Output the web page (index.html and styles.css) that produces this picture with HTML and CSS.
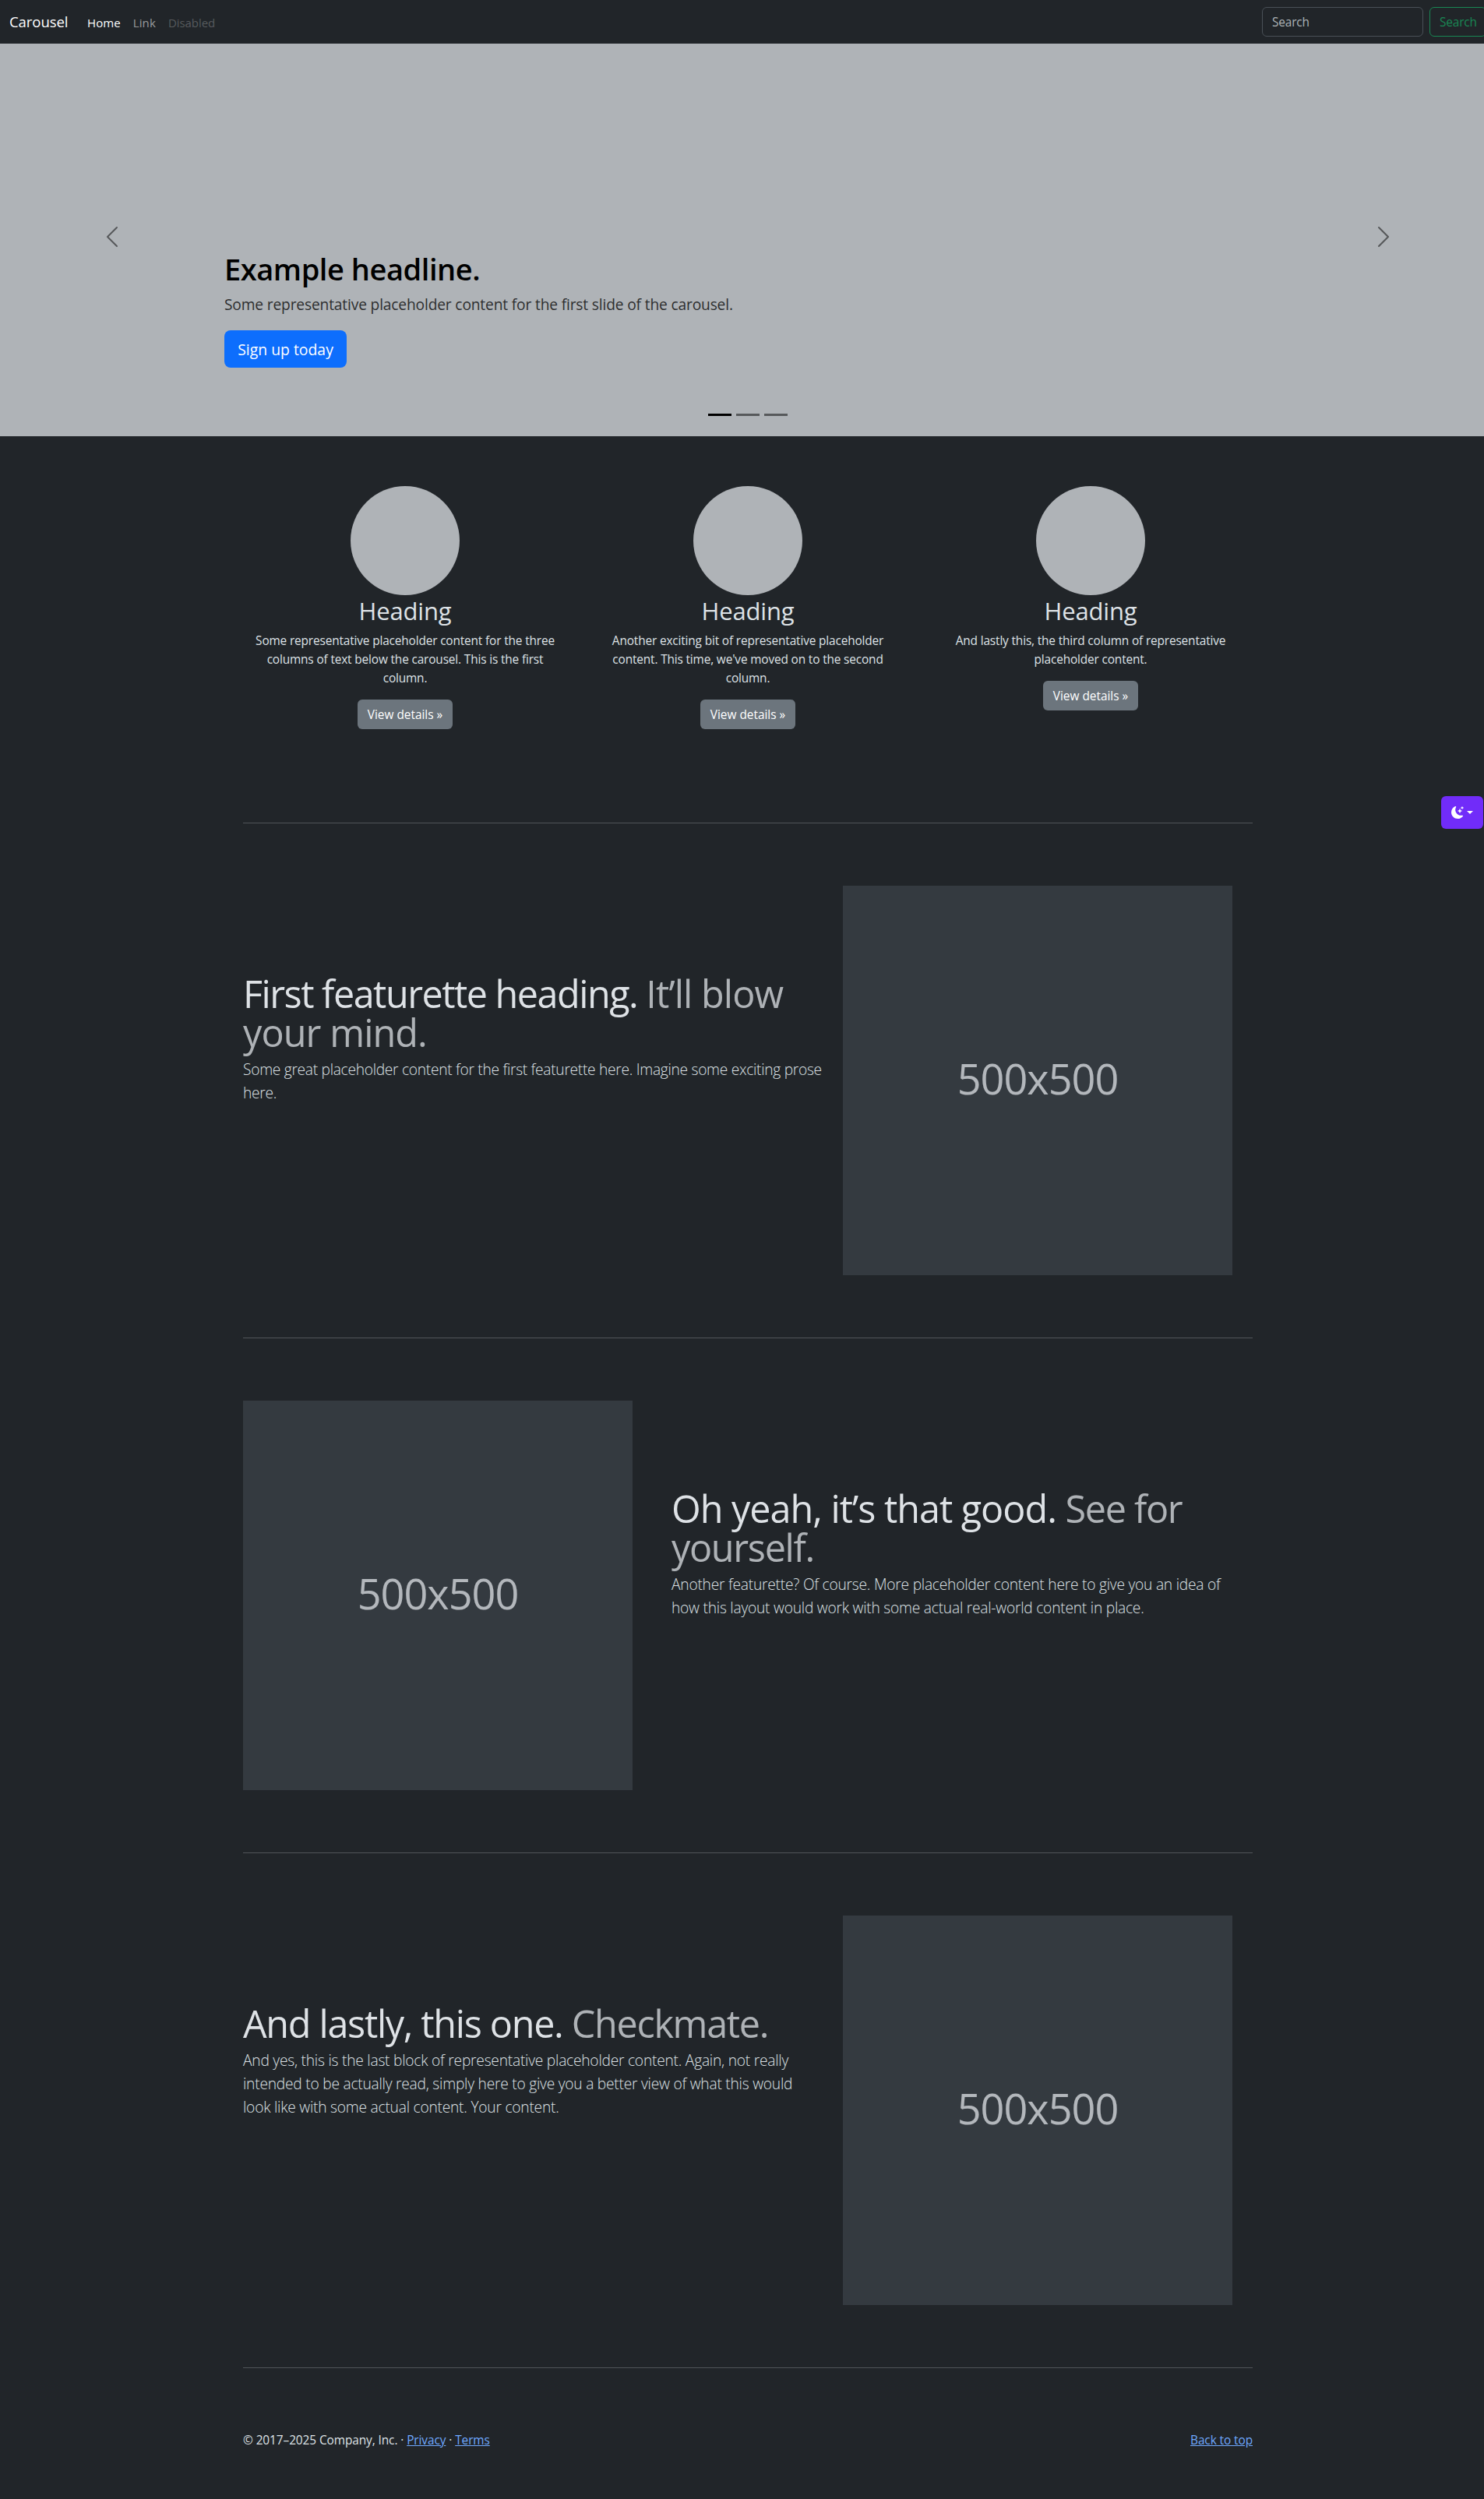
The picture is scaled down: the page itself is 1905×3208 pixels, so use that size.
FILE: index.html
```html
<!DOCTYPE html>
<html lang="en">
<head>
<meta charset="utf-8">
<title>Carousel</title>
<link rel="stylesheet" href="styles.css">
</head>
<body>
<nav class="navbar">
  <a class="brand">Carousel</a>
  <div class="nav-links">
    <a class="nav-link active">Home</a>
    <a class="nav-link">Link</a>
    <a class="nav-link disabled">Disabled</a>
  </div>
  <form class="search">
    <input class="search-input" type="search" placeholder="Search">
    <button class="search-btn" type="button">Search</button>
  </form>
</nav>

<main>
  <section class="carousel">
    <div class="arrow">
      <svg width="32" height="32" viewBox="0 0 16 16"><path fill-rule="evenodd" d="M11.354 1.646a.5.5 0 0 1 0 .708L5.707 8l5.647 5.646a.5.5 0 0 1-.708.708l-6-6a.5.5 0 0 1 0-.708l6-6a.5.5 0 0 1 .708 0z"/></svg>
    </div>
    <div class="slide">
      <h1 class="caption-title">Example headline.</h1>
      <p class="caption-text">Some representative placeholder content for the first slide of the carousel.</p>
      <a class="btn btn-primary">Sign up today</a>
    </div>
    <div class="arrow">
      <svg width="32" height="32" viewBox="0 0 16 16"><path fill-rule="evenodd" d="M4.646 1.646a.5.5 0 0 1 .708 0l6 6a.5.5 0 0 1 0 .708l-6 6a.5.5 0 0 1-.708-.708L10.293 8 4.646 2.354a.5.5 0 0 1 0-.708z"/></svg>
    </div>
    <div class="indicators"><span class="dot current"></span><span class="dot"></span><span class="dot"></span></div>
  </section>

  <div class="container">
    <div class="columns">
      <div class="column">
        <div class="avatar"></div>
        <h2 class="column-title">Heading</h2>
        <p class="column-text">Some representative placeholder content for the three columns of text below the carousel. This is the first column.</p>
        <a class="btn btn-secondary">View details »</a>
      </div>
      <div class="column">
        <div class="avatar"></div>
        <h2 class="column-title">Heading</h2>
        <p class="column-text">Another exciting bit of representative placeholder content. This time, we've moved on to the second column.</p>
        <a class="btn btn-secondary">View details »</a>
      </div>
      <div class="column">
        <div class="avatar"></div>
        <h2 class="column-title">Heading</h2>
        <p class="column-text">And lastly this, the third column of representative placeholder content.</p>
        <a class="btn btn-secondary">View details »</a>
      </div>
    </div>

    <hr class="divider">

    <section class="featurette">
      <div class="copy">
        <h2 class="featurette-title tight">First featurette heading. <span class="muted">It’ll blow your mind.</span></h2>
        <p class="lead">Some great placeholder content for the first featurette here. Imagine some exciting prose here.</p>
      </div>
      <div class="media"><div class="placeholder">500x500</div></div>
    </section>

    <hr class="divider">

    <section class="featurette flipped">
      <div class="copy">
        <h2 class="featurette-title loose">Oh yeah, it’s that good. <span class="muted">See for yourself.</span></h2>
        <p class="lead narrow">Another featurette? Of course. More placeholder content here to give you an idea of how this layout would work with some actual real-world content in place.</p>
      </div>
      <div class="media"><div class="placeholder">500x500</div></div>
    </section>

    <hr class="divider">

    <section class="featurette">
      <div class="copy">
        <h2 class="featurette-title">And lastly, this one. <span class="muted">Checkmate.</span></h2>
        <p class="lead narrow">And yes, this is the last block of representative placeholder content. Again, not really intended to be actually read, simply here to give you a better view of what this would look like with some actual content. Your content.</p>
      </div>
      <div class="media"><div class="placeholder">500x500</div></div>
    </section>

    <hr class="divider">

    <footer class="footer">
      <p>© 2017–2025 Company, Inc. · <a class="link">Privacy</a> · <a class="link">Terms</a></p>
      <p><a class="link">Back to top</a></p>
    </footer>
  </div>
</main>

<button class="theme-btn" type="button" aria-label="Toggle theme">
  <svg width="16" height="16" viewBox="0 0 16 16" fill="currentColor"><path d="M6 .278a.768.768 0 0 1 .08.858 7.208 7.208 0 0 0-.878 3.46c0 4.021 3.278 7.277 7.318 7.277.527 0 1.04-.055 1.533-.16a.787.787 0 0 1 .81.316.733.733 0 0 1-.031.893A8.349 8.349 0 0 1 8.344 16C3.734 16 0 12.286 0 7.71 0 4.266 2.114 1.312 5.124.06A.752.752 0 0 1 6 .278z"/><path d="M10.794 3.148a.217.217 0 0 1 .412 0l.387 1.162c.173.518.579.924 1.097 1.097l1.162.387a.217.217 0 0 1 0 .412l-1.162.387a1.734 1.734 0 0 0-1.097 1.097l-.387 1.162a.217.217 0 0 1-.412 0l-.387-1.162A1.734 1.734 0 0 0 9.31 6.593l-1.162-.387a.217.217 0 0 1 0-.412l1.162-.387a1.734 1.734 0 0 0 1.097-1.097l.387-1.162zM13.863.099a.145.145 0 0 1 .274 0l.258.774c.115.346.386.617.732.732l.774.258a.145.145 0 0 1 0 .274l-.774.258a1.156 1.156 0 0 0-.732.732l-.258.774a.145.145 0 0 1-.274 0l-.258-.774a1.156 1.156 0 0 0-.732-.732l-.774-.258a.145.145 0 0 1 0-.274l.774-.258c.346-.115.617-.386.732-.732L13.863.1z"/></svg>
  <span class="caret"></span>
</button>
</body>
</html>
```
FILE: styles.css
```css
*, *::before, *::after { box-sizing: border-box; }

html { overflow: hidden; background: #212529; }

body {
  width: 1920px;
  margin: 0;
  font-family: "Open Sans", "Noto Sans", sans-serif;
  font-size: 15.4px;
  line-height: 24px;
  letter-spacing: -.15px;
  color: #dee2e6;
  background: #212529;
}

h1, h2, p { margin: 0; }

/* Navbar */
.navbar {
  display: flex;
  align-items: center;
  height: 56px;
  padding: 0 12px;
}
.brand {
  width: 76px;
  margin-right: 16px;
  font-size: 18.6px;
  line-height: 30px;
  letter-spacing: -.1px;
  color: #fff;
}
.nav-links { display: flex; flex: 1; }
.nav-link {
  padding: 9px 8px 7px;
  font-size: 15px;
  letter-spacing: .1px;
  color: rgba(255, 255, 255, .55);
}
.nav-link.active { color: #fff; }
.nav-link.disabled { color: rgba(255, 255, 255, .25); letter-spacing: -.05px; }
.search { display: flex; gap: 8px; }
.search-input, .search-btn {
  height: 38px;
  padding: 1px 12px 0;
  font: inherit;
  letter-spacing: inherit;
  border: 1px solid #495057;
  border-radius: 6px;
  background: transparent;
  appearance: none;
}
.search-input { width: 207px; color: #dee2e6; }
.search-input::placeholder { color: rgba(222, 226, 230, .75); opacity: 1; }
.search-btn { width: 73px; color: #198754; border-color: #198754; }

/* Carousel */
.carousel {
  position: relative;
  display: flex;
  height: 504px;
  margin-bottom: 64px;
  background: #afb3b7;
}
.arrow {
  display: flex;
  align-items: center;
  justify-content: center;
  width: 15%;
  padding-bottom: 8px;
  opacity: .5;
}
.slide {
  display: flex;
  flex-direction: column;
  align-items: flex-start;
  justify-content: flex-end;
  flex: 1;
  padding-bottom: 88px;
  color: #000;
}
.caption-title {
  margin-bottom: 7px;
  font-size: 38px;
  font-weight: 600;
  line-height: 48px;
  letter-spacing: -.45px;
}
.caption-text {
  margin-bottom: 18px;
  font-size: 19.2px;
  line-height: 30px;
  letter-spacing: -.16px;
  opacity: .75;
}
.indicators {
  position: absolute;
  left: 0;
  right: 0;
  bottom: 26px;
  display: flex;
  justify-content: center;
  gap: 6px;
}
.dot { width: 30px; height: 3px; background: #000; opacity: .5; }
.dot.current { opacity: 1; }

/* Buttons */
.btn {
  display: inline-block;
  color: #fff;
  text-align: center;
  letter-spacing: 0;
}
.btn-primary {
  width: 157px;
  padding: 10px 0 8px;
  font-size: 19.4px;
  line-height: 30px;
  background: #0d6efd;
  border-radius: 8px;
}
.btn-secondary {
  width: 122px;
  padding: 8px 0 6px;
  background: #6c757d;
  border-radius: 6px;
}

/* Marketing columns */
.container { width: 1296px; margin: 0 auto; }
.columns {
  display: grid;
  grid-template-columns: repeat(3, 1fr);
  gap: 24px;
  height: 352px;
}
.column {
  display: flex;
  flex-direction: column;
  align-items: center;
  padding: 0 12px;
  text-align: center;
}
.avatar {
  width: 140px;
  height: 140px;
  margin-bottom: 1px;
  border-radius: 50%;
  background: #afb3b7;
}
.column-title {
  margin-bottom: 8px;
  font-size: 31px;
  font-weight: 400;
  line-height: 38px;
  letter-spacing: -.15px;
}
.column-text { margin-bottom: 15px; }

/* Featurettes */
.divider {
  height: 1px;
  margin: 80px 0;
  border: 0;
  background: #505458;
}
.featurette { display: flex; gap: 24px; }
.copy { width: 746px; padding-top: 113px; }
.media { width: 526px; }
.flipped { flex-direction: row-reverse; }
.featurette-title {
  margin-bottom: 8px;
  font-size: 48.5px;
  font-weight: 400;
  line-height: 50px;
  letter-spacing: -1.3px;
}
.muted { color: rgba(222, 226, 230, .75); }
.tight { letter-spacing: -1.5px; }
.tight .muted { letter-spacing: -.9px; }
.loose { letter-spacing: -1px; }
.loose .muted { letter-spacing: -1.3px; }
.lead {
  font-size: 19.2px;
  font-weight: 300;
  line-height: 30px;
  letter-spacing: -.29px;
}
.narrow { width: 725px; letter-spacing: -.23px; }
.placeholder {
  display: flex;
  align-items: center;
  justify-content: center;
  width: 500px;
  height: 500px;
  padding-bottom: 7px;
  font-size: 54px;
  letter-spacing: -1px;
  color: rgba(222, 226, 230, .75);
  background: #343a40;
}

/* Footer */
.footer {
  display: flex;
  justify-content: space-between;
  height: 88px;
  padding-top: 1px;
  letter-spacing: -.08px;
}
.link { color: #6ea8fe; text-decoration: underline; }

/* Floating theme switch */
.theme-btn {
  position: absolute;
  top: 1022px;
  left: 1850px;
  display: flex;
  align-items: center;
  gap: 4px;
  width: 54px;
  height: 42px;
  padding: 0 13px;
  color: #fff;
  background: #712cf9;
  border: 0;
  border-radius: 6px;
}
.caret {
  border-top: 4.8px solid;
  border-right: 4.8px solid transparent;
  border-left: 4.8px solid transparent;
}
```
